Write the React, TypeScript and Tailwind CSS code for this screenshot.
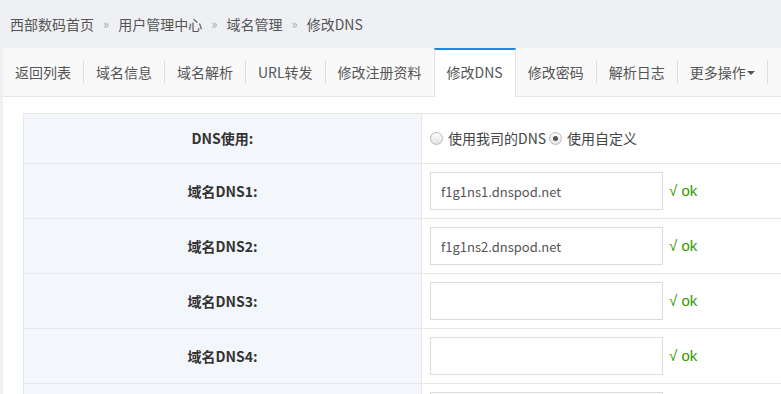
import type { FC } from "react";

const crumbs = ["西部数码首页", "用户管理中心", "域名管理", "修改DNS"];

const tabs = [
  "返回列表",
  "域名信息",
  "域名解析",
  "URL转发",
  "修改注册资料",
  "修改DNS",
  "修改密码",
  "解析日志",
  "更多操作",
];
const ACTIVE = 5;

// last row is only partly in view
const dnsRows = [
  { label: "域名DNS1:", value: "f1g1ns1.dnspod.net", ok: true },
  { label: "域名DNS2:", value: "f1g1ns2.dnspod.net", ok: true },
  { label: "域名DNS3:", value: "", ok: true },
  { label: "域名DNS4:", value: "", ok: true },
  { label: "", value: "", ok: false },
];

const Radio: FC<{ checked?: boolean }> = ({ checked = false }) => (
  <span className="w-[13px] h-[13px] rounded-full border border-[#b9b9b9] bg-gradient-to-b from-[#fdfdfd] to-[#e3e3e3] flex items-center justify-center mr-[5px]">
    {checked && <span className="w-[5px] h-[5px] rounded-full bg-[#555]" />}
  </span>
);

const Tabs: FC = () => (
  <div className="flex h-[49px] bg-[#f9f9f9] border-b border-[#e6e6e6]">
    {tabs.map((t, i) => {
      const active = i === ACTIVE;
      const nextActive = i + 1 === ACTIVE;
      return (
        <div key={t} className="flex items-center">
          {active ? (
            <div className="h-[49px] -mb-px px-3 flex items-center bg-white border-x border-[#e2e2e2] border-t-2 border-t-[#1e88e5] pb-[2px]">
              {t}
            </div>
          ) : (
            <div className="h-full px-3 flex items-center">
              {t}
              {i === tabs.length - 1 && (
                <span className="ml-[1px] mt-[2px] w-0 h-0 border-x-[4px] border-x-transparent border-t-[4px] border-t-[#555]" />
              )}
            </div>
          )}
          {!active && !nextActive && <div className="w-px h-[24px] bg-[#dedede]" />}
        </div>
      );
    })}
  </div>
);

export default function App() {
  return (
    <div
      className="w-[781px] h-[394px] overflow-hidden bg-[#eef0f4] text-[14px] text-[#555]"
      style={{ fontFamily: '"Noto Sans CJK SC", "Noto Sans", sans-serif' }}
    >
      <div className="h-[48px] flex items-center pl-[10px]">
        {crumbs.map((c, i) => (
          <div key={c} className="flex items-center">
            {i > 0 && <span className="text-[#aaa] mx-[9px] text-[13px]">»</span>}
            <span>{c}</span>
          </div>
        ))}
      </div>
      <div className="ml-[3px] bg-white">
        <Tabs />
        <div className="pl-[20px] pt-[16px]">
          <table className="w-[800px] border-collapse border border-[#e8e8e8]">
            <tbody>
              <tr className="h-[50px]">
                <td className="w-[398px] bg-[#f3f6fa] border border-[#e8e8e8] text-center font-bold text-[#333]">
                  DNS使用:
                </td>
                <td className="border border-[#e8e8e8] px-2">
                  <div className="flex items-center text-[#444]">
                    <Radio />
                    <span>使用我司的DNS</span>
                    <span className="w-[3px]" />
                    <Radio checked />
                    <span>使用自定义</span>
                  </div>
                </td>
              </tr>
              {dnsRows.map((r, i) => (
                <tr key={i} className="h-[55px]">
                  <td className="bg-[#f3f6fa] border border-[#e8e8e8] text-center font-bold text-[#333]">
                    {r.label}
                  </td>
                  <td className="border border-[#e8e8e8] px-2">
                    <div className="flex items-center">
                      <input
                        readOnly
                        value={r.value}
                        className="w-[233px] h-[38px] border border-[#dcdcdc] px-[10px] text-[13px] text-[#555] outline-none"
                      />
                      {r.ok && (
                        <span
                          className="ml-[6px] text-[15px] text-[#339900]"
                          style={{ fontFamily: '"Liberation Sans", "Noto Sans CJK SC", sans-serif' }}
                        >
                          √ ok
                        </span>
                      )}
                    </div>
                  </td>
                </tr>
              ))}
            </tbody>
          </table>
        </div>
      </div>
    </div>
  );
}
